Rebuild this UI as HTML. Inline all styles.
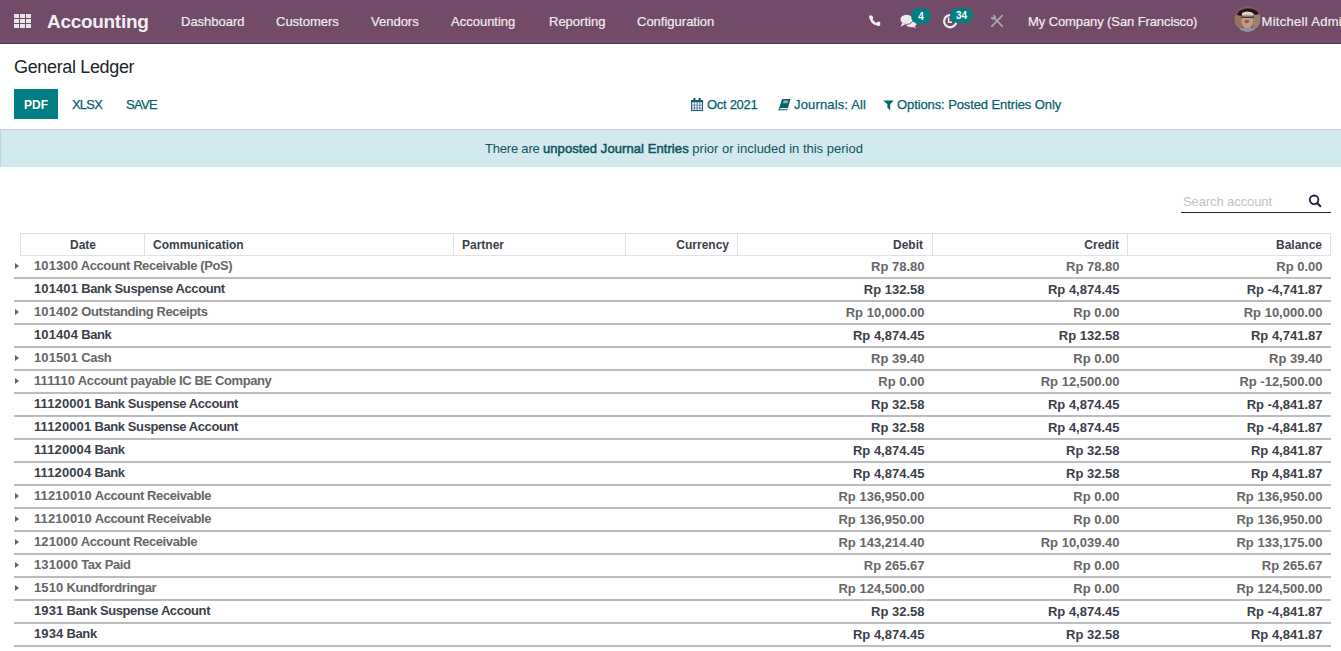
<!DOCTYPE html>
<html><head><meta charset="utf-8">
<style>
html,body{margin:0;padding:0;}
body{width:1341px;height:651px;overflow:hidden;position:relative;background:#fff;font-family:"Liberation Sans",sans-serif;font-size:13px;color:#4c4c4c;}
.t{position:absolute;white-space:nowrap;}
.nav{position:absolute;left:0;top:0;width:1341px;height:43px;background:#714b67;border-bottom:1px solid #4f3548;}
.grid{position:absolute;width:18px;height:15px;}
.grid i{position:absolute;width:5px;height:4px;background:#e9e4e8;}
.brand{color:#f3eef2;}
.menu{color:#f1ecf0;-webkit-text-stroke:0.2px #f1ecf0;}
.cp{position:absolute;left:0;top:44px;width:1341px;height:85px;border-bottom:1px solid #c9cbd1;background:#fff;}
.title{color:#212529;}
.btnp{position:absolute;left:14px;top:89px;width:44px;height:30px;background:#017e84;}
.bt{color:#fff;font-weight:bold;}
.lk{color:#05606b;-webkit-text-stroke:0.25px #05606b;}
.alert{position:absolute;left:0;top:130px;width:1340px;height:36px;background:#d2eaef;border-left:1px solid #bcd4e6;border-bottom:1px solid #c8e6eb;}
.al{color:#0c5460;}
.srch{position:absolute;left:1181px;top:212px;width:150px;height:1px;background:#222;}
.ph{color:#c2c2c2;}
.hdr{position:absolute;top:233px;height:21px;border:1px solid #e2e2e2;}
.hsep{position:absolute;top:234px;height:21px;width:1px;background:#e2e2e2;}
.ht{font-weight:bold;color:#3b3f4a;}
.row{position:absolute;left:14px;width:1317px;height:21px;border-bottom:2px solid #bcbcbc;}
.rt{font-weight:bold;}
.exp{color:#666;}
.nexp{color:#3b3f4a;}
.caret{position:absolute;left:14.8px;width:0;height:0;border-top:3.9px solid transparent;border-bottom:3.9px solid transparent;border-left:4.6px solid #5f5f5f;}
.badge{position:absolute;top:8px;background:#017e84;color:#fff;font-family:"Liberation Sans",sans-serif;font-size:10px;font-weight:bold;text-align:center;line-height:16px;}
</style></head><body>
<div class="nav">
<div class="grid" style="left:14px;top:14px"><i style="left:0px;top:0px"></i><i style="left:6px;top:0px"></i><i style="left:12px;top:0px"></i><i style="left:0px;top:5px"></i><i style="left:6px;top:5px"></i><i style="left:12px;top:5px"></i><i style="left:0px;top:10px"></i><i style="left:6px;top:10px"></i><i style="left:12px;top:10px"></i></div>
<div class="t brand" style="left:47px;top:10.22px;font-size:19px;line-height:23px;font-weight:bold;letter-spacing:-0.3px">Accounting</div>
<div class="t menu" style="left:181px;top:13.50px;font-size:13px;line-height:16px;">Dashboard</div>
<div class="t menu" style="left:276px;top:13.50px;font-size:13px;line-height:16px;">Customers</div>
<div class="t menu" style="left:371px;top:13.50px;font-size:13px;line-height:16px;">Vendors</div>
<div class="t menu" style="left:451px;top:13.50px;font-size:13px;line-height:16px;">Accounting</div>
<div class="t menu" style="left:549px;top:13.50px;font-size:13px;line-height:16px;">Reporting</div>
<div class="t menu" style="left:637px;top:13.50px;font-size:13px;line-height:16px;">Configuration</div>
<div class="t menu" style="left:1028px;top:13.50px;font-size:13px;line-height:16px;letter-spacing:-0.1px">My Company (San Francisco)</div>
<div class="t menu" style="left:1261.5px;top:13.50px;font-size:13px;line-height:16px;letter-spacing:0.3px">Mitchell Admin</div>
<svg style="position:absolute;left:864px;top:10px" width="22" height="22" viewBox="864 10 22 22"><path d="M870.6 16.6 Q871.2 23.2 878.2 24.6" fill="none" stroke="#f0edf0" stroke-width="2.6"/><path d="M869.2 16.4 Q869.4 14.9 871 15.2 L872.6 16.2 Q873.6 17.6 872.8 19 L871.5 20 Q869.4 19.2 869.2 16.4 Z" fill="#f0edf0"/><path d="M876.4 23.3 L877.4 21.9 Q878.8 21.2 880 22.1 L880.4 23.9 Q880.6 25.6 878.4 26.2 Q876.8 25.7 876.4 23.3 Z" fill="#f0edf0"/></svg>
<svg style="position:absolute;left:896px;top:8px" width="24" height="24" viewBox="896 8 24 24"><ellipse cx="911.2" cy="23.4" rx="5.4" ry="3.9" fill="#eeebee"/><path d="M913.5 25.5 L916.6 28.2 L911.5 26.8 Z" fill="#eeebee"/><ellipse cx="906.6" cy="19.4" rx="6.6" ry="5" fill="#eeebee" stroke="#714b67" stroke-width="0.9"/><path d="M902.3 22.8 L900.6 26.8 L905.8 24 Z" fill="#eeebee"/></svg>
<div class="badge" style="left:911px;width:20px;height:16px;border-radius:8px;line-height:18.5px">4</div>
<svg style="position:absolute;left:940px;top:11px" width="20" height="20" viewBox="940 11 20 20"><circle cx="950.2" cy="21.2" r="6.1" fill="none" stroke="#f0edf0" stroke-width="2.2"/><path d="M948.6 17.6 V22.2 H952" fill="none" stroke="#f0edf0" stroke-width="1.6"/></svg>
<div class="badge" style="left:950px;width:23px;height:15px;border-radius:7.5px;line-height:16.5px">34</div>
<svg style="position:absolute;left:988px;top:12px" width="18" height="18" viewBox="988 12 18 18"><path d="M1002.2 15.6 L991.9 26.2" stroke="#a4a6ac" stroke-width="1.9" stroke-linecap="round"/><path d="M994.8 18.4 L1002.1 26.2" stroke="#a4a6ac" stroke-width="1.9" stroke-linecap="round"/><circle cx="993.4" cy="17.3" r="2.5" fill="#a4a6ac"/><circle cx="992.2" cy="16.1" r="1.25" fill="#714b67"/></svg>
<svg style="position:absolute;left:1234px;top:6px" width="27" height="27" viewBox="0 0 27 27"><defs><clipPath id="av"><circle cx="13.5" cy="13" r="12.9"/></clipPath></defs><g clip-path="url(#av)"><rect width="27" height="27" fill="#7a5e5e"/><rect x="0" y="9" width="8" height="13" fill="#9a7260"/><rect x="19" y="5" width="8" height="17" fill="#9c8070"/><path d="M3 9 C4 1 22 0 25 8 L21 9 C19 5 9 5 7 10 Z" fill="#1e1618"/><ellipse cx="13.3" cy="14.5" rx="6" ry="8.3" fill="#c09c88"/><path d="M8 7 Q13 4 19 7 L19 9.5 Q13 7.5 8 9.5 Z" fill="#ddd2cc"/><rect x="7" y="10.5" width="13" height="1.5" fill="#4a3636"/><ellipse cx="12.8" cy="15.5" rx="2.4" ry="1.5" fill="#a04a44"/><rect x="6" y="22" width="15" height="6" fill="#8e94a4"/></g></svg>
</div>
<div class="cp"></div>
<div class="t title" style="left:14px;top:55.76px;font-size:18px;line-height:22px;letter-spacing:-0.35px">General Ledger</div>
<div class="btnp"></div>
<div class="t bt" style="left:24px;top:97.84px;font-size:12px;line-height:14px;">PDF</div>
<div class="t lk" style="left:72px;top:96.50px;font-size:13px;line-height:16px;letter-spacing:-0.8px">XLSX</div>
<div class="t lk" style="left:126px;top:96.50px;font-size:13px;line-height:16px;letter-spacing:-0.7px">SAVE</div>
<div class="t lk" style="left:707px;top:96.50px;font-size:13px;line-height:16px;letter-spacing:-0.3px">Oct 2021</div>
<div class="t lk" style="left:794px;top:96.50px;font-size:13px;line-height:16px;letter-spacing:0.15px">Journals: All</div>
<div class="t lk" style="left:897px;top:96.50px;font-size:13px;line-height:16px;letter-spacing:-0.1px">Options: Posted Entries Only</div>
<div class="alert"></div>
<div class="t al" style="left:485px;top:140.50px;font-size:13px;line-height:16px;"><span style="letter-spacing:-0.2px">There are </span><span style="letter-spacing:0.08px;-webkit-text-stroke:0.5px #0c5460">unposted Journal Entries</span> prior or included in this period</div>
<div class="srch"></div>
<div class="t ph" style="left:1183px;top:193.50px;font-size:13px;line-height:16px;letter-spacing:-0.1px">Search account</div>
<svg style="position:absolute;left:1307px;top:193px" width="16" height="16" viewBox="0 0 16 16"><circle cx="7.1" cy="6.8" r="4.3" fill="none" stroke="#1f2540" stroke-width="1.8"/><path d="M10.2 10 L13.4 13.3" stroke="#1f2540" stroke-width="2" stroke-linecap="round"/></svg>
<div class="hdr" style="left:20px;width:1309px"></div>
<div class="hsep" style="left:144px"></div>
<div class="hsep" style="left:453px"></div>
<div class="hsep" style="left:625px"></div>
<div class="hsep" style="left:737px"></div>
<div class="hsep" style="left:932px"></div>
<div class="hsep" style="left:1127px"></div>
<div class="t ht" style="left:70px;top:237.84px;font-size:12px;line-height:14px;">Date</div>
<div class="t ht" style="left:153px;top:237.84px;font-size:12px;line-height:14px;">Communication</div>
<div class="t ht" style="left:462px;top:237.84px;font-size:12px;line-height:14px;">Partner</div>
<div class="t ht" style="right:612px;top:237.84px;font-size:12px;line-height:14px;">Currency</div>
<div class="t ht" style="right:418px;top:237.84px;font-size:12px;line-height:14px;">Debit</div>
<div class="t ht" style="right:222px;top:237.84px;font-size:12px;line-height:14px;">Credit</div>
<div class="t ht" style="right:19px;top:237.84px;font-size:12px;line-height:14px;">Balance</div>
<div class="row" style="top:256px"></div>
<div class="caret" style="top:262.5px"></div>
<div class="t rt exp" style="left:34px;top:257.50px;font-size:13px;line-height:16px;letter-spacing:-0.4px"><span style="letter-spacing:0.1px">101300</span> Account Receivable (PoS)</div>
<div class="t rt exp" style="right:416.5px;top:258.50px;font-size:13px;line-height:16px;">Rp 78.80</div>
<div class="t rt exp" style="right:221.5px;top:258.50px;font-size:13px;line-height:16px;">Rp 78.80</div>
<div class="t rt exp" style="right:18.5px;top:258.50px;font-size:13px;line-height:16px;">Rp 0.00</div>
<div class="row" style="top:279px"></div>
<div class="t rt nexp" style="left:34px;top:280.50px;font-size:13px;line-height:16px;letter-spacing:-0.4px"><span style="letter-spacing:0.1px">101401</span> Bank Suspense Account</div>
<div class="t rt nexp" style="right:416.5px;top:281.50px;font-size:13px;line-height:16px;">Rp 132.58</div>
<div class="t rt nexp" style="right:221.5px;top:281.50px;font-size:13px;line-height:16px;">Rp 4,874.45</div>
<div class="t rt nexp" style="right:18.5px;top:281.50px;font-size:13px;line-height:16px;">Rp -4,741.87</div>
<div class="row" style="top:302px"></div>
<div class="caret" style="top:308.5px"></div>
<div class="t rt exp" style="left:34px;top:303.50px;font-size:13px;line-height:16px;letter-spacing:-0.4px"><span style="letter-spacing:0.1px">101402</span> Outstanding Receipts</div>
<div class="t rt exp" style="right:416.5px;top:304.50px;font-size:13px;line-height:16px;">Rp 10,000.00</div>
<div class="t rt exp" style="right:221.5px;top:304.50px;font-size:13px;line-height:16px;">Rp 0.00</div>
<div class="t rt exp" style="right:18.5px;top:304.50px;font-size:13px;line-height:16px;">Rp 10,000.00</div>
<div class="row" style="top:325px"></div>
<div class="t rt nexp" style="left:34px;top:326.50px;font-size:13px;line-height:16px;letter-spacing:-0.4px"><span style="letter-spacing:0.1px">101404</span> Bank</div>
<div class="t rt nexp" style="right:416.5px;top:327.50px;font-size:13px;line-height:16px;">Rp 4,874.45</div>
<div class="t rt nexp" style="right:221.5px;top:327.50px;font-size:13px;line-height:16px;">Rp 132.58</div>
<div class="t rt nexp" style="right:18.5px;top:327.50px;font-size:13px;line-height:16px;">Rp 4,741.87</div>
<div class="row" style="top:348px"></div>
<div class="caret" style="top:354.5px"></div>
<div class="t rt exp" style="left:34px;top:349.50px;font-size:13px;line-height:16px;letter-spacing:-0.4px"><span style="letter-spacing:0.1px">101501</span> Cash</div>
<div class="t rt exp" style="right:416.5px;top:350.50px;font-size:13px;line-height:16px;">Rp 39.40</div>
<div class="t rt exp" style="right:221.5px;top:350.50px;font-size:13px;line-height:16px;">Rp 0.00</div>
<div class="t rt exp" style="right:18.5px;top:350.50px;font-size:13px;line-height:16px;">Rp 39.40</div>
<div class="row" style="top:371px"></div>
<div class="caret" style="top:377.5px"></div>
<div class="t rt exp" style="left:34px;top:372.50px;font-size:13px;line-height:16px;letter-spacing:-0.4px"><span style="letter-spacing:0.1px">111110</span> Account payable IC BE Company</div>
<div class="t rt exp" style="right:416.5px;top:373.50px;font-size:13px;line-height:16px;">Rp 0.00</div>
<div class="t rt exp" style="right:221.5px;top:373.50px;font-size:13px;line-height:16px;">Rp 12,500.00</div>
<div class="t rt exp" style="right:18.5px;top:373.50px;font-size:13px;line-height:16px;">Rp -12,500.00</div>
<div class="row" style="top:394px"></div>
<div class="t rt nexp" style="left:34px;top:395.50px;font-size:13px;line-height:16px;letter-spacing:-0.4px"><span style="letter-spacing:0.1px">11120001</span> Bank Suspense Account</div>
<div class="t rt nexp" style="right:416.5px;top:396.50px;font-size:13px;line-height:16px;">Rp 32.58</div>
<div class="t rt nexp" style="right:221.5px;top:396.50px;font-size:13px;line-height:16px;">Rp 4,874.45</div>
<div class="t rt nexp" style="right:18.5px;top:396.50px;font-size:13px;line-height:16px;">Rp -4,841.87</div>
<div class="row" style="top:417px"></div>
<div class="t rt nexp" style="left:34px;top:418.50px;font-size:13px;line-height:16px;letter-spacing:-0.4px"><span style="letter-spacing:0.1px">11120001</span> Bank Suspense Account</div>
<div class="t rt nexp" style="right:416.5px;top:419.50px;font-size:13px;line-height:16px;">Rp 32.58</div>
<div class="t rt nexp" style="right:221.5px;top:419.50px;font-size:13px;line-height:16px;">Rp 4,874.45</div>
<div class="t rt nexp" style="right:18.5px;top:419.50px;font-size:13px;line-height:16px;">Rp -4,841.87</div>
<div class="row" style="top:440px"></div>
<div class="t rt nexp" style="left:34px;top:441.50px;font-size:13px;line-height:16px;letter-spacing:-0.4px"><span style="letter-spacing:0.1px">11120004</span> Bank</div>
<div class="t rt nexp" style="right:416.5px;top:442.50px;font-size:13px;line-height:16px;">Rp 4,874.45</div>
<div class="t rt nexp" style="right:221.5px;top:442.50px;font-size:13px;line-height:16px;">Rp 32.58</div>
<div class="t rt nexp" style="right:18.5px;top:442.50px;font-size:13px;line-height:16px;">Rp 4,841.87</div>
<div class="row" style="top:463px"></div>
<div class="t rt nexp" style="left:34px;top:464.50px;font-size:13px;line-height:16px;letter-spacing:-0.4px"><span style="letter-spacing:0.1px">11120004</span> Bank</div>
<div class="t rt nexp" style="right:416.5px;top:465.50px;font-size:13px;line-height:16px;">Rp 4,874.45</div>
<div class="t rt nexp" style="right:221.5px;top:465.50px;font-size:13px;line-height:16px;">Rp 32.58</div>
<div class="t rt nexp" style="right:18.5px;top:465.50px;font-size:13px;line-height:16px;">Rp 4,841.87</div>
<div class="row" style="top:486px"></div>
<div class="caret" style="top:492.5px"></div>
<div class="t rt exp" style="left:34px;top:487.50px;font-size:13px;line-height:16px;letter-spacing:-0.4px"><span style="letter-spacing:0.1px">11210010</span> Account Receivable</div>
<div class="t rt exp" style="right:416.5px;top:488.50px;font-size:13px;line-height:16px;">Rp 136,950.00</div>
<div class="t rt exp" style="right:221.5px;top:488.50px;font-size:13px;line-height:16px;">Rp 0.00</div>
<div class="t rt exp" style="right:18.5px;top:488.50px;font-size:13px;line-height:16px;">Rp 136,950.00</div>
<div class="row" style="top:509px"></div>
<div class="caret" style="top:515.5px"></div>
<div class="t rt exp" style="left:34px;top:510.50px;font-size:13px;line-height:16px;letter-spacing:-0.4px"><span style="letter-spacing:0.1px">11210010</span> Account Receivable</div>
<div class="t rt exp" style="right:416.5px;top:511.50px;font-size:13px;line-height:16px;">Rp 136,950.00</div>
<div class="t rt exp" style="right:221.5px;top:511.50px;font-size:13px;line-height:16px;">Rp 0.00</div>
<div class="t rt exp" style="right:18.5px;top:511.50px;font-size:13px;line-height:16px;">Rp 136,950.00</div>
<div class="row" style="top:532px"></div>
<div class="caret" style="top:538.5px"></div>
<div class="t rt exp" style="left:34px;top:533.50px;font-size:13px;line-height:16px;letter-spacing:-0.4px"><span style="letter-spacing:0.1px">121000</span> Account Receivable</div>
<div class="t rt exp" style="right:416.5px;top:534.50px;font-size:13px;line-height:16px;">Rp 143,214.40</div>
<div class="t rt exp" style="right:221.5px;top:534.50px;font-size:13px;line-height:16px;">Rp 10,039.40</div>
<div class="t rt exp" style="right:18.5px;top:534.50px;font-size:13px;line-height:16px;">Rp 133,175.00</div>
<div class="row" style="top:555px"></div>
<div class="caret" style="top:561.5px"></div>
<div class="t rt exp" style="left:34px;top:556.50px;font-size:13px;line-height:16px;letter-spacing:-0.4px"><span style="letter-spacing:0.1px">131000</span> Tax Paid</div>
<div class="t rt exp" style="right:416.5px;top:557.50px;font-size:13px;line-height:16px;">Rp 265.67</div>
<div class="t rt exp" style="right:221.5px;top:557.50px;font-size:13px;line-height:16px;">Rp 0.00</div>
<div class="t rt exp" style="right:18.5px;top:557.50px;font-size:13px;line-height:16px;">Rp 265.67</div>
<div class="row" style="top:578px"></div>
<div class="caret" style="top:584.5px"></div>
<div class="t rt exp" style="left:34px;top:579.50px;font-size:13px;line-height:16px;letter-spacing:-0.4px"><span style="letter-spacing:0.1px">1510</span> Kundfordringar</div>
<div class="t rt exp" style="right:416.5px;top:580.50px;font-size:13px;line-height:16px;">Rp 124,500.00</div>
<div class="t rt exp" style="right:221.5px;top:580.50px;font-size:13px;line-height:16px;">Rp 0.00</div>
<div class="t rt exp" style="right:18.5px;top:580.50px;font-size:13px;line-height:16px;">Rp 124,500.00</div>
<div class="row" style="top:601px"></div>
<div class="t rt nexp" style="left:34px;top:602.50px;font-size:13px;line-height:16px;letter-spacing:-0.4px"><span style="letter-spacing:0.1px">1931</span> Bank Suspense Account</div>
<div class="t rt nexp" style="right:416.5px;top:603.50px;font-size:13px;line-height:16px;">Rp 32.58</div>
<div class="t rt nexp" style="right:221.5px;top:603.50px;font-size:13px;line-height:16px;">Rp 4,874.45</div>
<div class="t rt nexp" style="right:18.5px;top:603.50px;font-size:13px;line-height:16px;">Rp -4,841.87</div>
<div class="row" style="top:624px"></div>
<div class="t rt nexp" style="left:34px;top:625.50px;font-size:13px;line-height:16px;letter-spacing:-0.4px"><span style="letter-spacing:0.1px">1934</span> Bank</div>
<div class="t rt nexp" style="right:416.5px;top:626.50px;font-size:13px;line-height:16px;">Rp 4,874.45</div>
<div class="t rt nexp" style="right:221.5px;top:626.50px;font-size:13px;line-height:16px;">Rp 32.58</div>
<div class="t rt nexp" style="right:18.5px;top:626.50px;font-size:13px;line-height:16px;">Rp 4,841.87</div>
<svg style="position:absolute;left:688px;top:95px" width="18" height="18" viewBox="688 95 18 18"><rect x="691.6" y="100.6" width="10.9" height="9.9" fill="none" stroke="#1d5a74" stroke-width="1.1"/><rect x="691.1" y="100" width="11.9" height="2.3" fill="#01666b"/><rect x="693.3" y="98" width="2.2" height="3" fill="#1d5a74"/><rect x="698.6" y="98" width="2.2" height="3" fill="#1d5a74"/><path d="M691.5 105.2 H702.6 M691.5 108 H702.6 M694.4 102 V110.5 M697.1 102 V110.5 M699.8 102 V110.5" stroke="#3b6585" stroke-width="0.75"/></svg>
<svg style="position:absolute;left:776px;top:96px" width="17" height="17" viewBox="776 96 17 17"><path d="M782.3 99 L790.5 99 L787.9 108.3 L779.3 108.3 Z" fill="#01666b"/><path d="M779.3 108.3 L787.9 108.3 L787.7 109.2 L779.3 109.2 Z" fill="#fff"/><path d="M778.7 109.2 L787.6 109.2 L787.3 110.3 L778.6 110.3 Z" fill="#0f5a72"/><path d="M782.3 99 L778.6 110.3 L779.5 110.3 L783 99 Z" fill="#0f5a72"/><path d="M783.7 100.4 L788.2 100.4 L787.5 103.3 L783 103.3 Z" fill="#a2aeb3"/></svg>
<svg style="position:absolute;left:882px;top:98.5px" width="13" height="13" viewBox="0 0 13 13"><path d="M1.2 1.4 H11.8 L8.2 5.2 V11.6 L5.4 8.4 V5.2 Z" fill="#01666b"/></svg>

</body></html>
